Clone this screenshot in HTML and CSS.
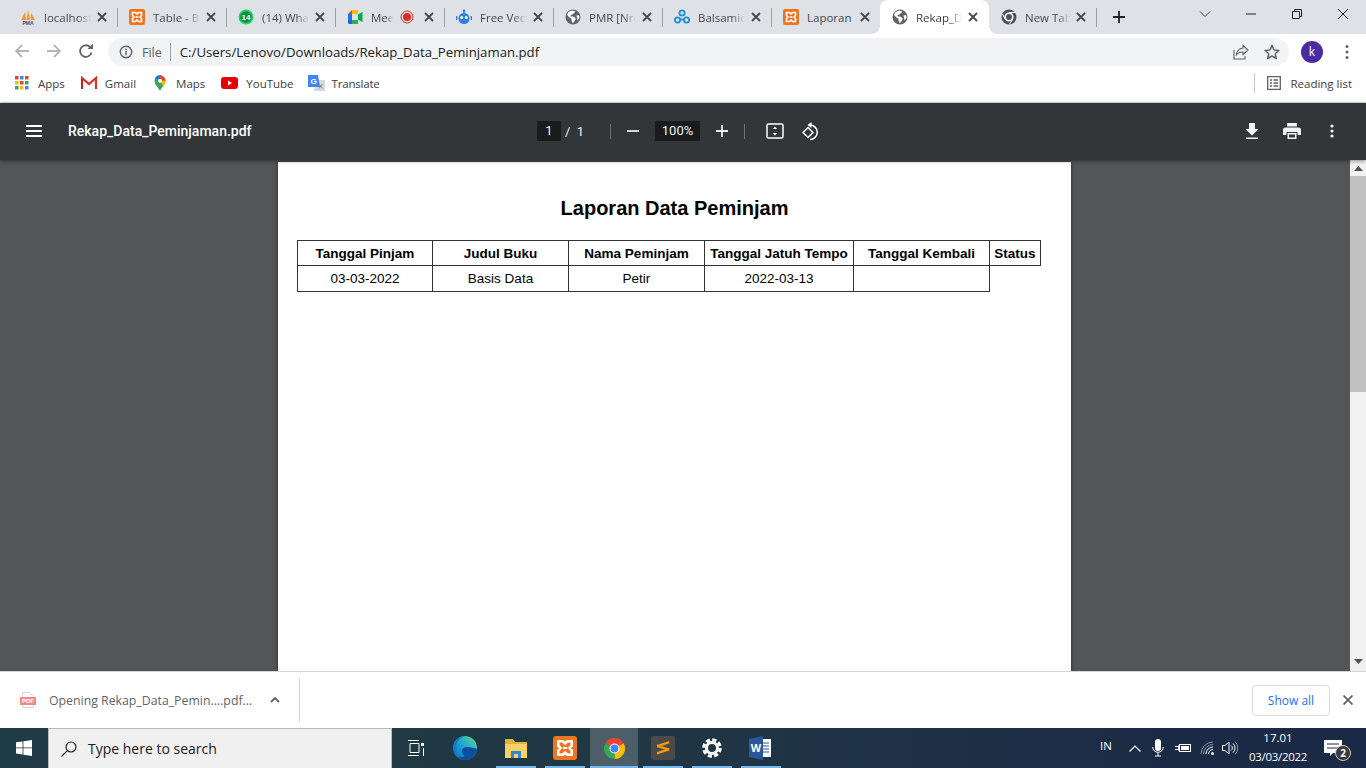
FILE: index.html
```html
<!DOCTYPE html>
<html lang="en">
<head>
    <meta charset="UTF-8">
    <title>Rekap_Data_Peminjaman.pdf</title>
    <link rel="stylesheet" href="styles.css">
</head>
<body>
    <svg class="defs" aria-hidden="true">
        <symbol id="i-close" viewBox="0 0 10 10"><path d="M1 1l8 8M9 1l-8 8" fill="none" stroke="currentColor" stroke-width="1.8"/></symbol>
        <symbol id="i-xampp" viewBox="0 0 16 16"><rect width="16" height="16" rx="2" fill="#f0741f"/><path d="M3.500 3.500h3L8 5l1.500-1.500h3v3L11 8l1.500 1.500v3h-3L8 11l-1.500 1.500h-3v-3L5 8 3.500 6.500z" fill="none" stroke="#fff" stroke-width="1.700" stroke-linejoin="round"/><path d="M6.500 8h3" stroke="#fff" stroke-width="1.500"/></symbol>
        <symbol id="i-globe" viewBox="0 0 16 16"><circle cx="8" cy="8" r="7.500" fill="#5f6368"/><path d="M7 1.500L3.500 3 2 6l3 3 1.500.5v2l1 2.500 1-.5 2-3V9L8 7.500H6L5.500 6l2-.5L9 4l1.500-1.500zM11.500 6.500l2.500-.5.500 3-2 2.500-.5-3z" fill="#fff"/></symbol>
    </svg>

    <div class="tabstrip">
        <div class="tab">
            <svg class="favicon" viewBox="0 0 16 16"><path d="M1 11L5 3l1 8zM6.500 11L8 1l2 10zM10.500 11L11 4l4 7z" fill="#f29a2e"/><text x="8" y="15.500" class="pma-text">PMA</text></svg>
            <span class="tab-title">localhost</span>
            <svg class="tab-close"><use href="#i-close"/></svg>
        </div>
        <i class="tab-sep"></i>
        <div class="tab">
            <svg class="favicon"><use href="#i-xampp"/></svg>
            <span class="tab-title">Table - Bootstrap</span>
            <svg class="tab-close"><use href="#i-close"/></svg>
        </div>
        <i class="tab-sep"></i>
        <div class="tab">
            <svg class="favicon" viewBox="0 0 16 16"><circle cx="8" cy="8" r="7.500" fill="#25d366"/><circle cx="8" cy="8" r="5.800" fill="#0f8f45"/><text x="8" y="10.800" class="wa-text">14</text></svg>
            <span class="tab-title">(14) WhatsApp</span>
            <svg class="tab-close"><use href="#i-close"/></svg>
        </div>
        <i class="tab-sep"></i>
        <div class="tab">
            <svg class="favicon" viewBox="0 0 16 16"><path d="M1 5l4-4v4z" fill="#ea4335"/><path d="M5 1h6v4H5z" fill="#fbbc04"/><path d="M1 5h4v6H1z" fill="#1a73e8"/><path d="M1 11h4v4H2.500Q1 15 1 13.500z" fill="#1967d2"/><path d="M5 11h6v4H5z" fill="#34a853"/><path d="M11 5.500L15.500 3v10L11 10.500z" fill="#00ac47"/></svg>
            <span class="tab-title tab-title-short">Meet - abc</span>
            <svg class="rec-dot" viewBox="0 0 14 14"><circle cx="7" cy="7" r="6" fill="none" stroke="#d93025" stroke-width="1"/><circle cx="7" cy="7" r="4" fill="#d93025"/></svg>
            <svg class="tab-close"><use href="#i-close"/></svg>
        </div>
        <i class="tab-sep"></i>
        <div class="tab">
            <svg class="favicon" viewBox="0 0 16 16"><circle cx="8" cy="9.500" r="5.500" fill="#2f7fe0"/><circle cx="8" cy="1.800" r="1.300" fill="#2f7fe0"/><path d="M8 2v3M.5 7v4M15.500 7v4" stroke="#2f7fe0" stroke-width="1.600"/><circle cx="5.700" cy="8.500" r="1.500" fill="#fff"/><circle cx="10.300" cy="8.500" r="1.500" fill="#fff"/></svg>
            <span class="tab-title">Free Vector</span>
            <svg class="tab-close"><use href="#i-close"/></svg>
        </div>
        <i class="tab-sep"></i>
        <div class="tab">
            <svg class="favicon"><use href="#i-globe"/></svg>
            <span class="tab-title">PMR [Nro]</span>
            <svg class="tab-close"><use href="#i-close"/></svg>
        </div>
        <i class="tab-sep"></i>
        <div class="tab">
            <svg class="favicon" viewBox="0 0 16 16"><g fill="none" stroke="#1d8fd8" stroke-width="1.800"><circle cx="8" cy="4" r="2.600"/><circle cx="3.500" cy="11" r="2.600"/><circle cx="12.500" cy="11" r="2.600"/><path d="M6 10.500h4"/></g></svg>
            <span class="tab-title">Balsamiq Cloud</span>
            <svg class="tab-close"><use href="#i-close"/></svg>
        </div>
        <i class="tab-sep"></i>
        <div class="tab">
            <svg class="favicon"><use href="#i-xampp"/></svg>
            <span class="tab-title tab-title-full">Laporan</span>
            <svg class="tab-close"><use href="#i-close"/></svg>
        </div>
        <div class="tab active">
            <svg class="favicon"><use href="#i-globe"/></svg>
            <span class="tab-title">Rekap_Data</span>
            <svg class="tab-close"><use href="#i-close"/></svg>
        </div>
        <div class="tab tab-new">
            <svg class="favicon" viewBox="0 0 16 16"><circle cx="8" cy="8" r="7.500" fill="#4d5155"/><circle cx="8" cy="8" r="3.800" fill="#4d5155" stroke="#fff" stroke-width="1.600"/><path d="M8 3.500h6.500M4.200 10.200L1.500 5M11.800 10.200l-3.300 5" stroke="#fff" stroke-width="1"/></svg>
            <span class="tab-title">New Tab</span>
            <svg class="tab-close"><use href="#i-close"/></svg>
        </div>
        <i class="tab-sep"></i>
        <svg class="new-tab" viewBox="0 0 12 12"><path d="M6 0v12M0 6h12" stroke="#202124" stroke-width="1.800"/></svg>
        <div class="window-btns">
            <div class="window-btn"><svg width="12" height="12" viewBox="0 0 12 12"><path d="M1 3.500l5 5 5-5" fill="none" stroke="#3c4043" stroke-width="1"/></svg></div>
            <div class="window-btn"><svg width="12" height="12" viewBox="0 0 12 12"><path d="M1 6h10" stroke="#202124" stroke-width="1"/></svg></div>
            <div class="window-btn"><svg width="12" height="12" viewBox="0 0 12 12"><path d="M1.500 3.500h7v7h-7zM3.500 3.500v-2h7v7h-2" fill="none" stroke="#202124" stroke-width="1"/></svg></div>
            <div class="window-btn"><svg width="12" height="12" viewBox="0 0 12 12"><path d="M1 1l10 10M11 1L1 11" stroke="#202124" stroke-width="1"/></svg></div>
        </div>
    </div>

    <div class="toolbar">
        <div class="nav-btn"><svg width="16" height="16" viewBox="0 0 16 16"><path d="M15 8H2M8 2L2 8l6 6" fill="none" stroke="#b4b6b9" stroke-width="1.800"/></svg></div>
        <div class="nav-btn"><svg width="16" height="16" viewBox="0 0 16 16"><path d="M1 8h13M8 2l6 6-6 6" fill="none" stroke="#b4b6b9" stroke-width="1.800"/></svg></div>
        <div class="nav-btn"><svg width="16" height="16" viewBox="0 0 16 16"><path d="M13.500 9.500A5.800 5.800 0 1 1 12 4" fill="none" stroke="#5f6368" stroke-width="1.800"/><path d="M9.500 6H15V.5z" fill="#5f6368"/></svg></div>
        <div class="omnibox">
            <svg class="info-icon" viewBox="0 0 14 14"><circle cx="7" cy="7" r="5.700" fill="none" stroke="#5f6368" stroke-width="1.400"/><path d="M7 6v4.200M7 3.600v1.400" stroke="#5f6368" stroke-width="1.400"/></svg>
            <span class="omni-scheme">File</span>
            <i class="omni-sep"></i>
            <span class="omni-url">C:/Users/Lenovo/Downloads/Rekap_Data_Peminjaman.pdf</span>
            <svg class="omni-share" viewBox="0 0 16 16"><path d="M10 1.500l5 4.500-5 4.500V8C6.500 8 4.500 9 3 11.500 3.500 7.500 6 4.500 10 4z" fill="none" stroke="#5f6368" stroke-width="1.100"/><path d="M1 6v9h11v-3" fill="none" stroke="#5f6368" stroke-width="1.100"/></svg>
            <svg class="omni-star" viewBox="0 0 16 16"><path d="M8 1.500l2 4.500 4.900.5-3.700 3.200 1.100 4.800L8 12l-4.300 2.500 1.100-4.800L1.100 6.500 6 6z" fill="none" stroke="#5f6368" stroke-width="1.500" stroke-linejoin="round"/></svg>
        </div>
        <div class="avatar">k</div>
        <svg class="menu-dots" viewBox="0 0 4 16"><circle cx="2" cy="2.500" r="1.500" fill="#5f6368"/><circle cx="2" cy="8" r="1.500" fill="#5f6368"/><circle cx="2" cy="13.500" r="1.500" fill="#5f6368"/></svg>
    </div>

    <div class="bookmarks">
        <div class="bookmark">
            <svg class="bm-icon" viewBox="0 0 14 14"><path d="M0 0h3.500v3.500H0z" fill="#ea4335"/><path d="M5 0h3.500v3.500H5z" fill="#4285f4"/><path d="M10 0h3.500v3.500H10z" fill="#ea4335"/><path d="M0 5h3.500v3.500H0z" fill="#fbbc04"/><path d="M5 5h3.500v3.500H5z" fill="#ea4335"/><path d="M10 5h3.500v3.500H10z" fill="#34a853"/><path d="M0 10h3.500v3.500H0z" fill="#34a853"/><path d="M5 10h3.500v3.500H5z" fill="#fbbc04"/><path d="M10 10h3.500v3.500H10z" fill="#4285f4"/></svg>
            <span>Apps</span>
        </div>
        <div class="bookmark bookmark-gmail">
            <svg class="bm-icon bm-wide" viewBox="0 0 16 14"><path d="M1 13V2l7 6 7-6v11" fill="none" stroke="#d93025" stroke-width="2.200"/><path d="M1 3v10" stroke="#c5221f" stroke-width="2"/></svg>
            <span>Gmail</span>
        </div>
        <div class="bookmark bookmark-maps">
            <svg class="bm-icon bm-maps" viewBox="0 0 14 16"><path d="M7 16C5.500 12.500 1.500 9.500 1.500 5.800a5.500 5.500 0 0 1 11 0C12.500 9.500 8.500 12.500 7 16z" fill="#34a853"/><path d="M2 3.500A5.500 5.500 0 0 1 7 .3L7 5.800z" fill="#1a73e8"/><path d="M7 .3a5.500 5.500 0 0 1 5.500 5.500H7z" fill="#ea4335"/><path d="M12.500 5.800c0 2-1.200 3.700-2.500 5.400L7 5.800z" fill="#fbbc04"/><circle cx="7" cy="5.800" r="2" fill="#fff"/></svg>
            <span>Maps</span>
        </div>
        <div class="bookmark bookmark-yt">
            <svg class="bm-icon bm-yt" viewBox="0 0 17 12"><rect width="17" height="12" rx="3" fill="#e60000"/><path d="M7 3.500l4 2.500-4 2.500z" fill="#fff"/></svg>
            <span>YouTube</span>
        </div>
        <div class="bookmark bookmark-gt">
            <svg class="bm-icon bm-gt" viewBox="0 0 17 16"><path d="M8 5h9v11H6z" fill="#d5d8dc"/><path d="M0 0h10l2 12H0z" fill="#4285f4"/><text x="5.500" y="9" class="gt-text">G</text><path d="M11 9l3.500 4.500M14.500 9L11 13.500" stroke="#80868b" stroke-width="1"/></svg>
            <span>Translate</span>
        </div>
        <div class="reading-list">
            <svg class="bm-icon" viewBox="0 0 14 14"><path d="M.7.700h12.600v12.600H.7z" fill="none" stroke="#5f6368" stroke-width="1.300"/><path d="M3 4h2M3 7h2M3 10h2M6.500 4H11M6.500 7H11M6.500 10H11" stroke="#5f6368" stroke-width="1.300"/></svg>
            <span>Reading list</span>
        </div>
    </div>

    <div class="pdf-toolbar">
        <div class="pdf-left">
            <svg class="hamburger" viewBox="0 0 16 12"><path d="M0 1h16M0 6h16M0 11h16" stroke="#fff" stroke-width="1.800"/></svg>
            <span class="pdf-name">Rekap_Data_Peminjaman.pdf</span>
        </div>
        <div class="pdf-center">
            <span class="page-input">1</span>
            <span class="page-total">/&nbsp;&nbsp;1</span>
            <i class="pdf-sep"></i>
            <div class="pdf-btn zoom-btn"><svg width="14" height="14" viewBox="0 0 14 14"><path d="M1 7h12" stroke="#e8eaed" stroke-width="1.800"/></svg></div>
            <span class="zoom-input">100%</span>
            <div class="pdf-btn zoom-btn"><svg width="14" height="14" viewBox="0 0 14 14"><path d="M1 7h12M7 1v12" stroke="#e8eaed" stroke-width="1.800"/></svg></div>
            <i class="pdf-sep"></i>
            <div class="pdf-btn fit-btn"><svg width="18" height="16" viewBox="0 0 18 16"><rect x="1" y="1" width="16" height="14" rx="1.500" fill="none" stroke="#fff" stroke-width="1.500"/><path d="M9 3.500l2 2.500H7zM9 12.500L7 10h4z" fill="#fff"/></svg></div>
            <div class="pdf-btn"><svg width="18" height="19" viewBox="0 0 18 19"><path d="M1 10.500l5-5 5 5-5 5z" fill="none" stroke="#fff" stroke-width="1.500"/><path d="M8 3a7 7 0 1 1 0 14.500" fill="none" stroke="#fff" stroke-width="1.500"/><path d="M9.500 0v6L5.500 3z" fill="#fff"/></svg></div>
        </div>
        <div class="pdf-right">
            <div class="pdf-btn"><svg width="14" height="16" viewBox="0 0 14 16"><path d="M4 0h6v6h3.500L7 12.500.5 6H4zM1 14.500h12V16H1z" fill="#f1f3f4"/></svg></div>
            <div class="pdf-btn"><svg width="18" height="16" viewBox="0 0 18 16"><path d="M4 0h10v3.500H4z" fill="#f1f3f4"/><path d="M2.500 4.500h13Q18 4.500 18 7v5h-3.500V9h-11v3H0V7q0-2.500 2.500-2.500z" fill="#f1f3f4"/><path d="M4.500 10h9v6h-9z" fill="#f1f3f4"/><path d="M6 11.500h6V14.500H6z" fill="#323639"/></svg></div>
            <div class="pdf-btn"><svg width="4" height="14" viewBox="0 0 4 14"><circle cx="2" cy="2" r="1.600" fill="#f1f3f4"/><circle cx="2" cy="7" r="1.600" fill="#f1f3f4"/><circle cx="2" cy="12" r="1.600" fill="#f1f3f4"/></svg></div>
        </div>
    </div>

    <div class="viewer">
        <div class="viewer-main">
            <div class="page">
                <h1>Laporan Data Peminjam</h1>
                <table>
                    <colgroup>
                        <col class="col-pinjam"><col class="col-judul"><col class="col-nama"><col class="col-tempo"><col class="col-kembali"><col class="col-status">
                    </colgroup>
                    <tr>
                        <th>Tanggal Pinjam</th>
                        <th>Judul Buku</th>
                        <th>Nama Peminjam</th>
                        <th>Tanggal Jatuh Tempo</th>
                        <th>Tanggal Kembali</th>
                        <th>Status</th>
                    </tr>
                    <tr>
                        <td>03-03-2022</td>
                        <td>Basis Data</td>
                        <td>Petir</td>
                        <td>2022-03-13</td>
                        <td></td>
                    </tr>
                </table>
            </div>
        </div>
        <div class="scrollbar">
            <div class="scroll-arrow"><svg width="9" height="5" viewBox="0 0 9 5"><path d="M4.500 0L9 5H0z" fill="#505050"/></svg></div>
            <div class="scroll-thumb"></div>
            <div class="scroll-arrow scroll-arrow-down"><svg width="9" height="5" viewBox="0 0 9 5"><path d="M0 0h9L4.500 5z" fill="#505050"/></svg></div>
        </div>
    </div>

    <div class="shelf">
        <svg class="shelf-file" viewBox="0 0 16 16"><path d="M2.500.5h7l4 4v11h-11z" fill="#fff" stroke="#d5d5d5"/><rect y="5" width="16" height="8" fill="#f28b82"/><text x="8" y="11.300" class="pdf-text">PDF</text></svg>
        <span class="shelf-name">Opening Rekap_Data_Pemin....pdf...</span>
        <svg class="shelf-chevron" viewBox="0 0 10 6"><path d="M1 5l4-4 4 4" fill="none" stroke="#5f6368" stroke-width="1.800"/></svg>
        <i class="shelf-sep"></i>
        <div class="show-all">Show all</div>
        <svg class="shelf-close" viewBox="0 0 10 10"><path d="M.5.500l9 9M9.500.500l-9 9" stroke="#5f6368" stroke-width="1.800"/></svg>
    </div>

    <div class="taskbar">
        <div class="start"><svg width="16" height="16" viewBox="0 0 16 16"><path d="M0 2.300L6.600 1.400V7.500H0zM7.400 1.300L16 0V7.500H7.400zM0 8.300H6.600V14.500L0 13.600zM7.400 8.300H16V16L7.400 14.700z" fill="#fff"/></svg></div>
        <div class="search">
            <svg class="search-icon" viewBox="0 0 16 16"><circle cx="10" cy="6" r="5" fill="none" stroke="#202020" stroke-width="1.200"/><path d="M6.300 9.700L.5 15.500" stroke="#202020" stroke-width="1.200"/></svg>
            <span>Type here to search</span>
        </div>
        <div class="task-apps">
            <div class="task-app task-view"><svg width="16" height="16" viewBox="0 0 16 16"><path d="M2 3.500h9v9H2z" fill="none" stroke="#fff"/><path d="M0 .5h11M0 15.500h11M15.500 8v8" stroke="#fff"/><rect x="13" y="3" width="3" height="3" fill="#fff"/></svg></div>
            <div class="task-app task-edge">
                <svg width="24" height="24" viewBox="0 0 24 24"><defs><linearGradient id="edge-g" x1="0" y1="1" x2="1" y2="0"><stop offset="0" stop-color="#0b63b8"/><stop offset=".5" stop-color="#1ba3d6"/><stop offset="1" stop-color="#66dc83"/></linearGradient></defs><circle cx="12" cy="12" r="12" fill="url(#edge-g)"/><path d="M24 13c-.5 6-5 11-12 11-3 0-6-1-8-3.500 3 1.500 6 1 7.500-1-1.500-1-2.500-2.500-2.500-4.500 0-2.500 2-4 5-4 4.500 0 7 1 10 2z" fill="#0d4f9e"/><path d="M0 12C1 5 6 0 12 0c-6 2-9 6-9 12 0 3 1 6 3 8-3-2-6-5-6-8z" fill="#0f7cc9"/></svg>
            </div>
            <div class="task-app running"><svg width="22" height="20" viewBox="0 0 22 20"><path d="M0 1h8l2 3h12v16H0z" fill="#e2b33c"/><path d="M0 6h22v14H0z" fill="#fad165"/><path d="M6 13h10v7h-3v-4H9v4H6z" fill="#2b88d8"/></svg></div>
            <div class="task-app running"><svg width="24" height="24"><use href="#i-xampp"/></svg></div>
            <div class="task-app running task-chrome">
                <svg width="23" height="23" viewBox="0 0 24 24"><path d="M12 12L2.470 6.500A11 11 0 0 1 21.530 6.500z" fill="#ea4335"/><path d="M12 12l9.530-5.500A11 11 0 0 1 12 23z" fill="#fbbc04"/><path d="M12 12v11A11 11 0 0 1 2.470 6.500z" fill="#34a853"/><circle cx="12" cy="12" r="5.200" fill="#fff"/><circle cx="12" cy="12" r="4.100" fill="#4285f4"/></svg>
            </div>
            <div class="task-app running"><svg width="24" height="24" viewBox="0 0 24 24"><rect width="24" height="24" rx="2" fill="#4a4a4a"/><path d="M6 11.500l12-4V5L6 9zM18 12.500l-12-4V11l12 4zM6 18.500l12-4V12L6 16z" fill="#f59a0e"/></svg></div>
            <div class="task-app running"><svg width="20" height="20" viewBox="0 0 20 20"><circle cx="10" cy="10" r="5.500" fill="none" stroke="#fff" stroke-width="3"/><circle cx="10" cy="10" r="8.300" fill="none" stroke="#fff" stroke-width="3" stroke-dasharray="4.200 2.320"/></svg></div>
            <div class="task-app running"><svg width="24" height="24" viewBox="0 0 24 24"><path d="M8 3h14v18H8z" fill="#fff"/><path d="M13 7h7M13 10h7M13 13h7M13 16h7" stroke="#2b579a" stroke-width="1.200"/><path d="M0 3l14-3v24L0 21z" fill="#2b579a"/><text x="7" y="16" class="word-text">W</text></svg></div>
        </div>
        <div class="tray">
            <span class="tray-lang">IN</span>
            <div class="tray-cell tray-chev"><svg width="12" height="7" viewBox="0 0 12 7"><path d="M.5 6.500L6 1l5.500 5.500" fill="none" stroke="#fff" stroke-width="1.200"/></svg></div>
            <div class="tray-cell tray-mic"><svg width="12" height="18" viewBox="0 0 12 18"><rect x="3" y="0" width="6" height="12" rx="3" fill="#fff"/><path d="M.7 8a5.300 5.300 0 0 0 10.600 0M6 13.500V17M3 17h6" fill="none" stroke="#fff"/></svg></div>
            <div class="tray-cell tray-batt"><svg width="16" height="10" viewBox="0 0 16 10"><rect x="4.500" y="1.500" width="11" height="7" fill="none" stroke="#fff"/><rect x="6" y="3" width="8" height="4" fill="#fff"/><path d="M0 3.500h3.500M0 6.500h3.500M3.500 2.500v5" stroke="#fff"/></svg></div>
            <div class="tray-cell tray-wifi"><svg width="16" height="14" viewBox="0 0 16 14"><path d="M1 13A12 12 0 0 1 13 1M3.500 13A9.500 9.500 0 0 1 13 3.500" fill="none" stroke="#8a94a3"/><path d="M6 13A7 7 0 0 1 13 6M8.500 13A4.500 4.500 0 0 1 13 8.500" fill="none" stroke="#fff"/><circle cx="12.500" cy="12.500" r="1.500" fill="#fff"/></svg></div>
            <div class="tray-cell tray-vol"><svg width="16" height="14" viewBox="0 0 16 14"><path d="M.5 4.500h2.500L7 1v12L3 9.500H.5z" fill="none" stroke="#fff"/><path d="M9 4.500a3 3 0 0 1 0 5M11 2.500a6 6 0 0 1 0 9" fill="none" stroke="#fff"/><path d="M13 .5a9 9 0 0 1 0 13" fill="none" stroke="#8a94a3"/></svg></div>
            <div class="tray-clock"><span>17.01</span><span class="tray-date">03/03/2022</span></div>
            <div class="tray-cell tray-notif">
                <svg width="20" height="16" viewBox="0 0 20 16"><path d="M1 0h18v13H10l-3 3v-3H1z" fill="#fff"/><path d="M4 4h12M4 8h12" stroke="#1b2a45"/></svg>
                <span class="notif-badge">2</span>
            </div>
        </div>
    </div>
</body>
</html>
```

FILE: styles.css
```css
* {
    box-sizing: border-box;
}
html, body {
    margin: 0;
    padding: 0;
}
body {
    width: 1366px;
    height: 768px;
    overflow: hidden;
    display: flex;
    flex-direction: column;
    font-family: "Open Sans", "Noto Sans", sans-serif;
    color: #3c4043;
}
.defs {
    display: none;
}
svg {
    display: block;
    flex: none;
}

/* tabs */
.tabstrip {
    height: 34px;
    flex: none;
    display: flex;
    align-items: center;
    padding-left: 9px;
    background: #dee1e6;
}
.tab {
    position: relative;
    width: 108px;
    height: 34px;
    flex: none;
    display: flex;
    align-items: center;
    padding: 0 10px 0 11px;
    font-size: 11.5px;
    color: #45484d;
}
.tab.active {
    width: 109px;
    padding: 0 11px 0 12px;
    background: #fff;
    border-radius: 8px 8px 0 0;
    color: #3c4043;
}
.tab.active::before, .tab.active::after {
    content: "";
    position: absolute;
    bottom: 0;
    width: 8px;
    height: 8px;
}
.tab.active::before {
    left: -8px;
    background: radial-gradient(circle at 0 0, #dee1e6 7.5px, #fff 8px);
}
.tab.active::after {
    right: -8px;
    background: radial-gradient(circle at 100% 0, #dee1e6 7.5px, #fff 8px);
}
.tab-new {
    width: 107px;
    padding-left: 12px;
}
.tab-sep {
    width: 1px;
    height: 19px;
    flex: none;
    background: #9aa0a6;
}
.favicon {
    width: 16px;
    height: 16px;
    margin-right: 8px;
}
.tab-title {
    flex: 1;
    min-width: 0;
    overflow: hidden;
    white-space: nowrap;
    -webkit-mask-image: linear-gradient(90deg, #000 72%, transparent);
    mask-image: linear-gradient(90deg, #000 72%, transparent);
}
.tab-title-full {
    -webkit-mask-image: none;
    mask-image: none;
}
.tab-title-short {
    flex: none;
    width: 22px;
}
.rec-dot {
    width: 14px;
    height: 14px;
    margin-left: 7px;
    margin-right: auto;
}
.tab-close {
    width: 10px;
    height: 10px;
    margin-left: 6px;
    color: #45484d;
}
.rec-dot + .tab-close {
    margin-left: 4px;
}
.new-tab {
    width: 12px;
    height: 12px;
    margin-left: 16px;
}
.window-btns {
    display: flex;
    margin-left: auto;
    align-self: flex-start;
}
.window-btn {
    width: 46px;
    height: 28px;
    display: flex;
    align-items: center;
    justify-content: center;
}
.pma-text {
    font: bold 5px "Liberation Sans", sans-serif;
    fill: #3d4a80;
    text-anchor: middle;
}
.wa-text {
    font: bold 8px "Liberation Sans", sans-serif;
    fill: #fff;
    text-anchor: middle;
}
.gt-text {
    font: bold 8px "Liberation Sans", sans-serif;
    fill: #fff;
    text-anchor: middle;
}
.pdf-text {
    font: bold 6px "Liberation Sans", sans-serif;
    fill: #fff;
    text-anchor: middle;
}
.word-text {
    font: bold 11px "Liberation Sans", sans-serif;
    fill: #fff;
    text-anchor: middle;
}

/* address bar */
.toolbar {
    height: 33px;
    flex: none;
    display: flex;
    align-items: center;
    padding-left: 6px;
    background: #fff;
}
.nav-btn {
    width: 32px;
    height: 28px;
    display: flex;
    align-items: center;
    justify-content: center;
}
.omnibox {
    width: 1181px;
    height: 28px;
    margin: 3px 0 0 6px;
    display: flex;
    align-items: center;
    padding: 0 9px 0 11px;
    border-radius: 14px;
    background: #f1f3f4;
    font-size: 13.2px;
    color: #202124;
}
.info-icon {
    width: 14px;
    height: 14px;
}
.omni-scheme {
    margin-left: 9px;
    font-size: 12.5px;
    color: #5f6368;
}
.omni-sep {
    width: 1px;
    height: 18px;
    margin: 0 9px 0 8px;
    background: #9aa0a6;
}
.omni-share {
    width: 16px;
    height: 16px;
    margin-left: auto;
}
.omni-star {
    width: 16px;
    height: 16px;
    margin-left: 15px;
}
.avatar {
    width: 22px;
    height: 22px;
    margin: 3px 0 0 12px;
    border-radius: 50%;
    background: #4b2ca0;
    color: #fff;
    font-size: 12px;
    line-height: 21px;
    text-align: center;
}
.menu-dots {
    width: 4px;
    height: 16px;
    margin: 3px 0 0 22px;
}

/* bookmarks */
.bookmarks {
    height: 36px;
    flex: none;
    display: flex;
    align-items: center;
    gap: 16px;
    padding: 0 14px 3px 15px;
    background: #fff;
    border-bottom: 1px solid #e3e4e6;
    font-size: 11.5px;
    color: #3c4043;
}
.bookmark {
    display: flex;
    align-items: center;
    gap: 9px;
}
.bookmark-gmail, .bookmark-yt {
    gap: 8px;
}
.bookmark-maps {
    margin-left: 1px;
}
.bookmark-gt {
    gap: 7px;
    margin-left: -2px;
    letter-spacing: -0.2px;
}
.bm-icon {
    width: 14px;
    height: 14px;
}
.bm-wide {
    width: 16px;
}
.bm-maps {
    height: 16px;
}
.bm-yt {
    width: 17px;
}
.bm-gt {
    width: 17px;
    height: 16px;
}
.reading-list {
    display: flex;
    align-items: center;
    gap: 9px;
    height: 20px;
    margin-left: auto;
    padding-left: 12px;
    border-left: 1px solid #c8cacd;
}

/* pdf viewer toolbar */
.pdf-toolbar {
    position: relative;
    z-index: 2;
    height: 57px;
    flex: none;
    display: flex;
    align-items: center;
    padding-bottom: 1px;
    background: #323639;
    box-shadow: 0 1px 4px rgba(0, 0, 0, 0.45);
    color: #f1f3f4;
}
.pdf-left {
    width: 537px;
    flex: none;
    display: flex;
    align-items: center;
    padding-left: 26px;
}
.hamburger {
    width: 16px;
    height: 12px;
}
.pdf-name {
    margin-left: 26px;
    font: 500 14px Roboto, sans-serif;
    color: #fff;
}
.pdf-center {
    display: flex;
    align-items: center;
    font: 13px Roboto, sans-serif;
}
.page-input {
    width: 24px;
    height: 20px;
    background: #191b1c;
    line-height: 20px;
    text-align: center;
}
.page-total {
    width: 49px;
    padding-left: 4px;
}
.pdf-sep {
    width: 1px;
    height: 15px;
    background: #6e7174;
}
.pdf-btn {
    width: 36px;
    height: 32px;
    flex: none;
    display: flex;
    align-items: center;
    justify-content: center;
}
.zoom-btn {
    width: 32px;
    margin: 0 6px;
}
.zoom-input {
    width: 45px;
    height: 20px;
    background: #191b1c;
    line-height: 20px;
    text-align: center;
}
.fit-btn {
    margin-left: 12px;
}
.pdf-right {
    display: flex;
    margin-left: auto;
    padding-right: 14px;
}
.pdf-right .pdf-btn {
    width: 40px;
}

/* document */
.viewer {
    flex: 1;
    min-height: 0;
    display: flex;
    background: #525659;
}
.viewer-main {
    flex: 1;
    padding: 2px 0 0 278px;
    overflow: hidden;
}
.page {
    width: 793px;
    height: 600px;
    padding: 33px 0 0 19px;
    background: #fff;
    box-shadow: 0 0 4px rgba(0, 0, 0, 0.5);
    font-family: "Liberation Sans", Arial, sans-serif;
    color: #000;
}
.page h1 {
    width: 755px;
    margin: 0 0 19px;
    font-size: 20px;
    line-height: 26px;
    text-align: center;
}
.page table {
    width: 744px;
    table-layout: fixed;
    border-collapse: collapse;
    font-size: 13.5px;
}
.page th, .page td {
    padding: 0;
    border: 1px solid #333;
    text-align: center;
    white-space: nowrap;
}
.page th {
    height: 25px;
}
.page td {
    height: 26px;
}
.col-pinjam {
    width: 135px;
}
.col-judul, .col-nama, .col-kembali {
    width: 136px;
}
.col-tempo {
    width: 149px;
}
.scrollbar {
    width: 16px;
    flex: none;
    display: flex;
    flex-direction: column;
    background: #f1f1f1;
}
.scroll-arrow {
    height: 16px;
    display: flex;
    align-items: center;
    justify-content: center;
}
.scroll-arrow-down {
    margin-top: auto;
    height: 20px;
}
.scroll-thumb {
    height: 216px;
    background: #c1c1c1;
}

/* download shelf */
.shelf {
    height: 57px;
    flex: none;
    display: flex;
    align-items: center;
    padding-left: 20px;
    background: #fff;
    border-top: 1px solid #d4d5d7;
}
.shelf-file {
    width: 16px;
    height: 16px;
}
.shelf-name {
    width: 221px;
    margin-left: 13px;
    font-size: 12.3px;
    color: #5f6368;
    white-space: nowrap;
}
.shelf-chevron {
    width: 10px;
    height: 6px;
}
.shelf-sep {
    width: 1px;
    height: 44px;
    margin-left: 19px;
    background: #d0d1d3;
}
.show-all {
    width: 78px;
    height: 31px;
    margin-left: auto;
    border: 1px solid #dadce0;
    border-radius: 4px;
    color: #1a73e8;
    font-size: 12px;
    line-height: 29px;
    text-align: center;
}
.shelf-close {
    width: 10px;
    height: 10px;
    margin: 0 13px 0 13px;
}

/* windows taskbar */
.taskbar {
    height: 40px;
    flex: none;
    display: flex;
    background: linear-gradient(90deg, #1f3b45 0%, #203744 45%, #1b2b45 85%, #1a2945 100%);
    color: #fff;
}
.start {
    width: 48px;
    display: flex;
    align-items: center;
    justify-content: center;
}
.search {
    width: 344px;
    display: flex;
    align-items: center;
    padding-left: 12px;
    background: #f0f0f0;
    border: 1px solid #b9bcbe;
    border-bottom: 0;
    font-size: 14px;
    color: #202020;
}
.search-icon {
    width: 16px;
    height: 16px;
    margin-right: 11px;
}
.task-apps {
    display: flex;
    gap: 9px;
}
.task-app {
    width: 40px;
    height: 40px;
    display: flex;
    align-items: center;
    justify-content: center;
}
.task-view {
    width: 48px;
    margin-right: -4px;
}
.task-edge {
    margin-right: 2px;
}
.running {
    border-bottom: 2px solid #76b9ed;
    padding-top: 2px;
}
.task-chrome {
    width: 48px;
    margin: 0 -4px;
    background: rgba(255, 255, 255, 0.2);
}
.tray {
    display: flex;
    align-items: center;
    margin-left: auto;
    padding-right: 14px;
    font-size: 11.5px;
}
.tray-lang {
    width: 32px;
    margin-bottom: 5px;
    text-align: center;
}
.tray-cell {
    display: flex;
    align-items: center;
    justify-content: center;
}
.tray-chev {
    width: 26px;
}
.tray-mic {
    width: 20px;
}
.tray-batt {
    width: 30px;
}
.tray-wifi {
    width: 20px;
}
.tray-vol {
    width: 24px;
}
.tray-clock {
    width: 72px;
    display: flex;
    flex-direction: column;
    align-items: center;
    gap: 3px;
    line-height: 16px;
    padding-bottom: 1px;
}
.tray-date {
    letter-spacing: -0.3px;
}
.tray-notif {
    position: relative;
    width: 38px;
}
.notif-badge {
    position: absolute;
    left: 21px;
    top: 5px;
    width: 16px;
    height: 16px;
    border-radius: 50%;
    background: #3a3a3a;
    border: 1px solid #cfcfcf;
    font-size: 10px;
    font-weight: bold;
    line-height: 14px;
    text-align: center;
}
```
